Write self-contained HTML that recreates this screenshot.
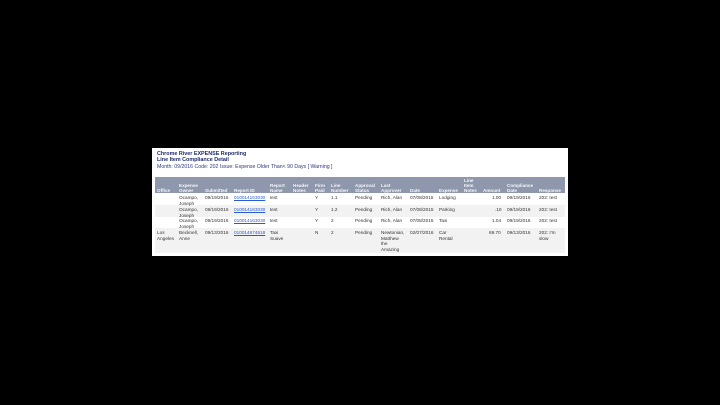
<!DOCTYPE html>
<html><head><style>
body{margin:0;width:720px;height:405px;background:#000;position:relative;overflow:hidden;font-family:"Liberation Sans",sans-serif}
#box{position:absolute;left:152px;top:148px;width:416px;height:108px;background:#fff}
.t{position:absolute;font-size:4.7px;line-height:5.6px;white-space:nowrap}
.ti{color:#1f2a6e;font-weight:bold;font-size:5.4px}
#hd{position:absolute;left:3px;top:29px;width:410px;height:16px;background:#8e97ab}
.h{color:#f4f6fa;font-weight:bold;font-size:4.6px;line-height:5.2px}
.r{position:absolute;left:3px;width:410px}
.c{color:#333}
a{color:#2a5bd7;text-decoration:underline}
</style></head><body>
<div id="box">
<div class="t ti" style="left:5px;top:4px">Chrome River EXPENSE Reporting</div>
<div class="t ti" style="left:5px;top:10px">Line Item Compliance Detail</div>
<div class="t" style="left:5px;top:17px;color:#2c3a7a;font-size:5.2px">Month: 09/2016 Code: 202 Issue: Expense Older Than&lt; 90 Days [ Warning ]</div>
<div id="hd"></div>
<div class="r" style="top:57px;height:12px;background:#f2f2f2"></div>
<div class="r" style="top:80px;height:25px;background:#f2f2f2"></div>
</div>
<div style="position:absolute;left:0;top:0">
<div class="t h" style="left:157px;top:188px">Office</div>
<div class="t h" style="left:179px;top:183px">Expense<br>Owner</div>
<div class="t h" style="left:205px;top:188px">Submitted</div>
<div class="t h" style="left:234px;top:188px">Report ID</div>
<div class="t h" style="left:270px;top:183px">Report<br>Name</div>
<div class="t h" style="left:293px;top:183px">Header<br>Notes</div>
<div class="t h" style="left:315px;top:183px">Firm<br>Paid</div>
<div class="t h" style="left:331px;top:183px">Line<br>Number</div>
<div class="t h" style="left:355px;top:183px">Approval<br>Status</div>
<div class="t h" style="left:381px;top:183px">Last<br>Approver</div>
<div class="t h" style="left:410px;top:188px">Date</div>
<div class="t h" style="left:439px;top:188px">Expense</div>
<div class="t h" style="left:464px;top:178px">Line<br>Item<br>Notes</div>
<div class="t h" style="left:483px;top:188px">Amount</div>
<div class="t h" style="left:507px;top:183px">Compliance<br>Date</div>
<div class="t h" style="left:539px;top:188px">Response</div>

<div class="t c" style="left:179px;top:195px">Ocampo,<br>Joseph</div>
<div class="t c" style="left:205px;top:195px">09/19/2016</div>
<div class="t" style="left:234px;top:195px"><a>010014163030</a></div>
<div class="t c" style="left:270px;top:195px">test</div>
<div class="t c" style="left:315px;top:195px">Y</div>
<div class="t c" style="left:331px;top:195px">1.1</div>
<div class="t c" style="left:355px;top:195px">Pending</div>
<div class="t c" style="left:381px;top:195px">Rich, Alan</div>
<div class="t c" style="left:410px;top:195px">07/08/2015</div>
<div class="t c" style="left:439px;top:195px">Lodging</div>
<div class="t c" style="left:492px;top:195px">1.00</div>
<div class="t c" style="left:507px;top:195px">09/19/2016</div>
<div class="t c" style="left:539px;top:195px">202: test</div>

<div class="t c" style="left:179px;top:207px">Ocampo,<br>Joseph</div>
<div class="t c" style="left:205px;top:207px">09/19/2016</div>
<div class="t" style="left:234px;top:207px"><a>010014163030</a></div>
<div class="t c" style="left:270px;top:207px">test</div>
<div class="t c" style="left:315px;top:207px">Y</div>
<div class="t c" style="left:331px;top:207px">1.2</div>
<div class="t c" style="left:355px;top:207px">Pending</div>
<div class="t c" style="left:381px;top:207px">Rich, Alan</div>
<div class="t c" style="left:410px;top:207px">07/08/2015</div>
<div class="t c" style="left:439px;top:207px">Parking</div>
<div class="t c" style="left:495px;top:207px">.10</div>
<div class="t c" style="left:507px;top:207px">09/19/2016</div>
<div class="t c" style="left:539px;top:207px">202: test</div>

<div class="t c" style="left:179px;top:218px">Ocampo,<br>Joseph</div>
<div class="t c" style="left:205px;top:218px">09/19/2016</div>
<div class="t" style="left:234px;top:218px"><a>010014163030</a></div>
<div class="t c" style="left:270px;top:218px">test</div>
<div class="t c" style="left:315px;top:218px">Y</div>
<div class="t c" style="left:331px;top:218px">2</div>
<div class="t c" style="left:355px;top:218px">Pending</div>
<div class="t c" style="left:381px;top:218px">Rich, Alan</div>
<div class="t c" style="left:410px;top:218px">07/08/2015</div>
<div class="t c" style="left:439px;top:218px">Taxi</div>
<div class="t c" style="left:492px;top:218px">1.04</div>
<div class="t c" style="left:507px;top:218px">09/19/2016</div>
<div class="t c" style="left:539px;top:218px">202: test</div>

<div class="t c" style="left:157px;top:230px">Los<br>Angeles</div>
<div class="t c" style="left:179px;top:230px">Becknell,<br>Anne</div>
<div class="t c" style="left:205px;top:230px">09/13/2016</div>
<div class="t" style="left:234px;top:230px"><a>010014674618</a></div>
<div class="t c" style="left:270px;top:230px">Taxi<br>Suave</div>
<div class="t c" style="left:315px;top:230px">N</div>
<div class="t c" style="left:331px;top:230px">2</div>
<div class="t c" style="left:355px;top:230px">Pending</div>
<div class="t c" style="left:381px;top:230px">Newtonian,<br>Matthew<br>the<br>Amazing</div>
<div class="t c" style="left:410px;top:230px">02/07/2016</div>
<div class="t c" style="left:439px;top:230px">Car<br>Rental</div>
<div class="t c" style="left:489px;top:230px">69.70</div>
<div class="t c" style="left:507px;top:230px">09/13/2016</div>
<div class="t c" style="left:539px;top:230px">202: I'm<br>slow</div>
</div>
</body></html>
